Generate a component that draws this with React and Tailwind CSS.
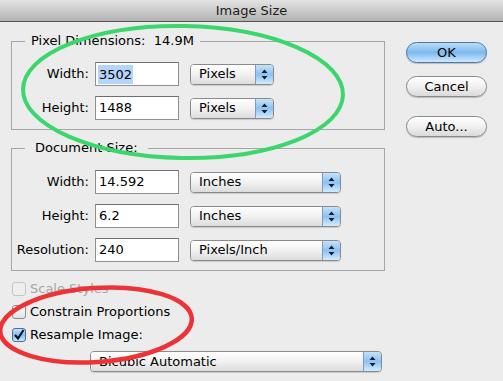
import React from 'react';

const FONT = { fontFamily: '"DejaVu Sans", "Liberation Sans", sans-serif' };

function Arrows() {
  return (
    <svg width="7" height="11" viewBox="0 0 7 11">
      <path d="M3.5 0.5 L6.5 4 L0.5 4 Z" fill="#101c3a" />
      <path d="M3.5 10.5 L6.5 7 L0.5 7 Z" fill="#101c3a" />
    </svg>
  );
}

function Select({ label, width }) {
  return (
    <div
      className="h-[21px] flex items-stretch rounded-[4px] border border-[#8a8a8a] overflow-hidden shadow-[0_1px_1px_rgba(0,0,0,0.15)]"
      style={{ width }}
    >
      <div className="flex-1 flex items-center pl-[8px] text-[13px] text-black bg-gradient-to-b from-[#ffffff] via-[#f1f1f1] to-[#dcdcdc]">
        {label}
      </div>
      <div className="w-[18px] flex items-center justify-center border-l border-[#7f9cc0] bg-gradient-to-b from-[#c7e1f8] via-[#8cc2ef] to-[#d3ebfd]">
        <Arrows />
      </div>
    </div>
  );
}

function Field({ label, value, selected, unit, unitWidth }) {
  return (
    <div className="flex items-center">
      <div className="w-[78px] text-right text-[13px] text-black pr-[1px]">{label}</div>
      <div className="ml-[5px] w-[84px] h-[24px] bg-white border border-[#8f8f8f] border-t-[#6e6e6e] flex items-center pl-[2px] text-[13px] text-black">
        {selected ? (
          <span className="bg-[#b4d4fc] px-[1px] leading-[19px]">{value}</span>
        ) : (
          <span className="px-[1px]">{value}</span>
        )}
      </div>
      <div className="ml-[11px]">
        <Select label={unit} width={unitWidth} />
      </div>
    </div>
  );
}

function Checkbox({ checked, disabled, label }) {
  return (
    <div className="flex items-center h-[23px]">
      <div
        className={`w-[14px] h-[14px] rounded-[3px] border flex items-center justify-center ${
          disabled
            ? 'border-[#c4c4c4] bg-[#eeeeee]'
            : checked
            ? 'border-[#4e6f97] bg-gradient-to-b from-[#c5e0f8] via-[#85bdee] to-[#cfe8fc]'
            : 'border-[#8c8c8c] bg-gradient-to-b from-[#ffffff] to-[#e2e2e2]'
        }`}
      >
        {checked && (
          <svg width="12" height="12" viewBox="0 0 12 12">
            <path d="M2 6 L5 9.5 L10.5 1" fill="none" stroke="#0c1424" strokeWidth="2.2" />
          </svg>
        )}
      </div>
      <span className={`ml-[4px] text-[13px] ${disabled ? 'text-[#a6a6a6]' : 'text-black'}`}>{label}</span>
    </div>
  );
}

function Button({ children, primary }) {
  return (
    <div
      className={`w-[81px] h-[21px] rounded-full border flex items-center justify-center text-[13px] text-black shadow-[0_1px_1px_rgba(0,0,0,0.2)] ${
        primary
          ? 'border-[#4a79a8] bg-gradient-to-b from-[#bcdcf8] via-[#7cb9ef] to-[#cfe8fd]'
          : 'border-[#8a8a8a] bg-gradient-to-b from-[#ffffff] via-[#f0f0f0] to-[#dadada]'
      }`}
    >
      {children}
    </div>
  );
}

export default function App() {
  return (
    <div className="relative w-[503px] h-[381px] bg-[#ececec] overflow-hidden" style={FONT}>
      <div className="h-[22px] border-b border-[#555555] bg-gradient-to-b from-[#e4e4e4] to-[#b3b3b3] flex items-center justify-center text-[13px] text-[#1f1a18]">
        Image Size
      </div>

      <div className="flex pl-[11px] pt-[11px]">
        <div className="w-[374px]">
          <fieldset className="border border-[#a6a6a6] pt-[13px] pb-[9px] flex flex-col gap-[10px]">
            <legend className="ml-[13px] px-[6px] text-[13px] leading-[16px] text-black">
              Pixel Dimensions:&nbsp;&nbsp;14.9M
            </legend>
            <Field label="Width:" value="3502" selected unit="Pixels" unitWidth={84} />
            <Field label="Height:" value="1488" unit="Pixels" unitWidth={84} />
          </fieldset>

          <fieldset className="mt-[10px] border border-[#a6a6a6] pt-[14px] pb-[8px] flex flex-col gap-[10px]">
            <legend className="ml-[13px] px-[10px] text-[13px] leading-[16px] text-black">
              Document Size:
            </legend>
            <Field label="Width:" value="14.592" unit="Inches" unitWidth={151} />
            <Field label="Height:" value="6.2" unit="Inches" unitWidth={151} />
            <Field label="Resolution:" value="240" unit="Pixels/Inch" unitWidth={151} />
          </fieldset>

          <div className="mt-[6px] pl-[1px] flex flex-col">
            <Checkbox disabled label="Scale Styles" />
            <Checkbox label="Constrain Proportions" />
            <Checkbox checked label="Resample Image:" />
          </div>

          <div className="mt-[5px] ml-[79px]">
            <Select label="Bicubic Automatic" width={292} />
          </div>
        </div>

        <div className="ml-[21px] pt-[9px] flex flex-col">
          <Button primary>OK</Button>
          <div className="mt-[13px]">
            <Button>Cancel</Button>
          </div>
          <div className="mt-[19px]">
            <Button>Auto...</Button>
          </div>
        </div>
      </div>

      <svg className="absolute inset-0 pointer-events-none" width="503" height="381" viewBox="0 0 503 381">
        <ellipse cx="183" cy="92" rx="160" ry="66" fill="none" stroke="#3bd66c" strokeWidth="4" transform="rotate(1 183 92)" />
        <ellipse cx="96" cy="325" rx="96" ry="37" fill="none" stroke="#ec3338" strokeWidth="4.5" transform="rotate(-4 96 325)" />
      </svg>
    </div>
  );
}
